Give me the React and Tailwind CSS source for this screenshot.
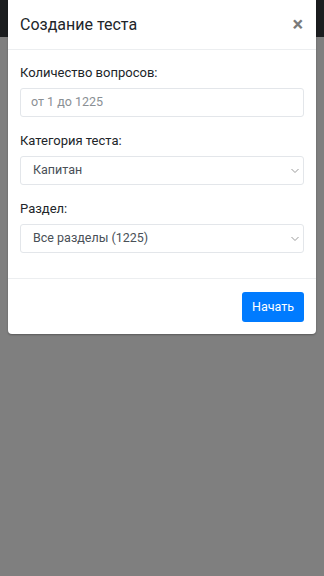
import React from "react";

function Chevron() {
  return (
    <svg width="8" height="5" viewBox="0 0 8 5" className="absolute right-[4px] top-1/2 -translate-y-1/2">
      <polyline points="0.5,0.5 4,4 7.5,0.5" fill="none" stroke="#9a9a9a" strokeWidth="1" />
    </svg>
  );
}

function Field({ label, children, last }) {
  return (
    <div className={last ? "" : "mb-[14px]"}>
      <div className="text-[13px] leading-[20px] text-[#212529] mb-[5px]">{label}</div>
      {children}
    </div>
  );
}

function Select({ value }) {
  return (
    <div className="relative h-[29px] rounded-[3px] border border-[#e3e6ea] bg-white flex items-center pl-[12px] text-[12.5px] text-[#495057]">
      <span>{value}</span>
      <Chevron />
    </div>
  );
}

export default function App() {
  return (
    <div className="relative h-[576px] w-full bg-[#7f7f7f] overflow-hidden" style={{ fontFamily: "Roboto, 'Noto Sans', sans-serif" }}>
      <div className="h-[37px] bg-[#1b1d1f]" />
      <div className="absolute left-[8px] top-0 w-[308px] bg-white rounded-b-[4px] shadow-[0_1px_2px_rgba(0,0,0,0.3)]">
        <div className="h-[50px] border-b border-[#eceef0] flex items-center justify-between px-[12px]">
          <div className="text-[16px] text-[#212529] leading-[24px] pt-[1px]">Создание теста</div>
          <div className="text-[20px] font-bold text-[#7a7a7a] leading-none pr-[1px] pb-[2px]">×</div>
        </div>
        <div className="px-[12px] pt-[13px] pb-[25px]">
          <Field label="Количество вопросов:">
            <div className="h-[29px] rounded-[3px] border border-[#e3e6ea] bg-white flex items-center pl-[10px] text-[12.5px] text-[#8a8f94]">
              от 1 до 1225
            </div>
          </Field>
          <Field label="Категория теста:">
            <Select value="Капитан" />
          </Field>
          <Field label="Раздел:" last>
            <Select value="Все разделы (1225)" />
          </Field>
        </div>
        <div className="border-t border-[#eceef0] flex justify-end px-[12px] pt-[13px] pb-[12px]">
          <button className="h-[30px] w-[62px] rounded-[3px] bg-[#007bff] text-white text-[12.5px]">Начать</button>
        </div>
      </div>
    </div>
  );
}
